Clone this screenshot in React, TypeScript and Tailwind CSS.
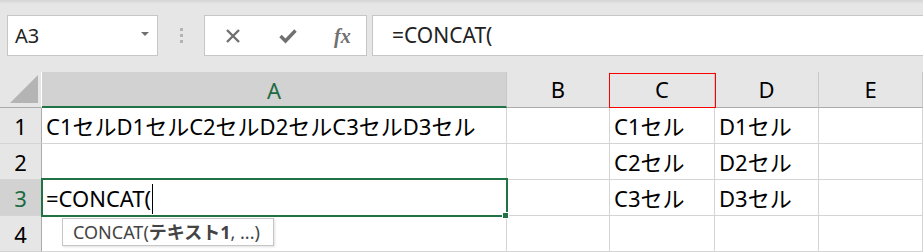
const font = { fontFamily: '"Noto Sans", "Noto Sans CJK JP", sans-serif' };

const cols = ["A", "B", "C", "D", "E"];

const rows: Record<number, Record<string, string>> = {
  1: { A: "C1セルD1セルC2セルD2セルC3セルD3セル", C: "C1セル", D: "D1セル" },
  2: { C: "C2セル", D: "D2セル" },
  3: { A: "=CONCAT(", C: "C3セル", D: "D3セル" },
  4: {},
};

export default function App() {
  return (
    <div className="h-[252px] w-[923px] overflow-hidden bg-[#e6e6e6] text-black" style={font}>
      {/* formula bar */}
      <div className="flex h-[72px] items-start bg-gradient-to-b from-[#d4d4d4] via-[#e6e6e6] to-[#e6e6e6] bg-[length:100%_8px] bg-no-repeat pl-[7px] pt-[15px]">
        <div className="flex h-[41px] w-[151px] items-center justify-between border border-[#c6c6c6] bg-white pl-[7px] pr-[8px]">
          <span className="text-[20px] text-[#222]">A3</span>
          <span className="mb-[3px] h-0 w-0 border-x-[4px] border-t-[4px] border-x-transparent border-t-[#707070]" />
        </div>
        <div className="flex w-[46px] flex-col items-center gap-[3px] pt-[13px]">
          <span className="block h-[3px] w-[3px] bg-[#b4b4b4]" />
          <span className="block h-[3px] w-[3px] bg-[#b4b4b4]" />
          <span className="block h-[3px] w-[3px] bg-[#b4b4b4]" />
        </div>
        <div className="flex h-[41px] w-[163px] items-center border border-[#c6c6c6] bg-white">
          <svg className="ml-[20px]" width="16" height="16" viewBox="0 0 16 16">
            <path d="M2 2 L14 14 M14 2 L2 14" stroke="#707070" strokeWidth="2.4" fill="none" />
          </svg>
          <svg className="ml-[38px]" width="18" height="16" viewBox="0 0 18 16">
            <path d="M1.5 8 L6.5 13 L16.5 2.5" stroke="#707070" strokeWidth="3.4" fill="none" />
          </svg>
          <span
            className="ml-[37px] text-[20px] font-bold italic text-[#707070]"
            style={{ fontFamily: '"Liberation Serif", serif' }}
          >
            fx
          </span>
        </div>
        <div className="ml-[5px] flex h-[41px] flex-1 items-center border-y border-l border-[#c6c6c6] bg-white pl-[19px]">
          <span className="text-[21px] text-[#222]">=CONCAT(</span>
        </div>
      </div>

      {/* sheet */}
      <div className="relative">
        <div className="grid grid-cols-[42px_465px_103px_105px_104px_1fr] grid-rows-[36px_36px_36px_36px_36px]">
          {/* corner */}
          <div className="relative border-b border-r border-b-[#ababab] border-r-white bg-[#e6e6e6]">
            <svg className="absolute bottom-[4px] right-[3px]" width="28" height="28" viewBox="0 0 28 28">
              <path d="M28 0 L28 28 L0 28 Z" fill="#b4b4b4" />
            </svg>
          </div>
          {cols.map((c) =>
            c === "A" ? (
              <div
                key={c}
                className="flex items-center justify-center border-b-2 border-r border-b-[#217346] border-r-[#c8c8c8] bg-[#d2d2d2] pt-[2px] text-[22px] text-[#1d6b41]"
              >
                {c}
              </div>
            ) : (
              <div
                key={c}
                className="flex items-center justify-center border-b border-r border-b-[#ababab] border-r-[#c8c8c8] bg-[#e6e6e6] text-[22px]"
              >
                {c}
              </div>
            )
          )}

          {[1, 2, 3, 4].map((r) => (
            <Row key={r} r={r} />
          ))}
        </div>

        {/* annotation around column C */}
        <div className="pointer-events-none absolute left-[609px] top-[1px] z-10 h-[35px] w-[107px] border border-[#ff0000]" />

        {/* active cell */}
        <div className="pointer-events-none absolute left-[41px] top-[106px] h-[39px] w-[467px] border-2 border-[#217346]" />
        <div className="pointer-events-none absolute left-[502px] top-[140px] h-[7px] w-[7px] border border-white bg-[#217346]" />

        {/* function tooltip */}
        <div className="absolute left-[62px] top-[146px] flex h-[28px] w-[212px] items-center border border-[#c6c6c6] bg-white pl-[10px] text-[18px] text-[#444] shadow-[1px_1px_2px_rgba(0,0,0,0.12)]">
          CONCAT(<b className="font-bold">テキスト1</b>, ...)
        </div>
      </div>
    </div>
  );
}

function Row({ r }: { r: number }) {
  const data = rows[r];
  const active = r === 3;
  return (
    <>
      <div
        className={`flex items-center justify-center border-b border-r border-b-[#d4d4d4] border-r-[#ababab] pt-[2px] text-[22px] ${
          active ? "bg-[#d2d2d2] text-[#1d6b41]" : "bg-[#e6e6e6]"
        }`}
      >
        {r}
      </div>
      {cols.map((c) => (
        <div
          key={c}
          className="flex items-center overflow-visible whitespace-nowrap border-b border-r border-[#d4d4d4] bg-white pl-[4px] pt-[2px] text-[22px]"
        >
          {data[c] ?? ""}
          {active && c === "A" && <span className="ml-[1px] h-[30px] w-px bg-black" />}
        </div>
      ))}
    </>
  );
}
